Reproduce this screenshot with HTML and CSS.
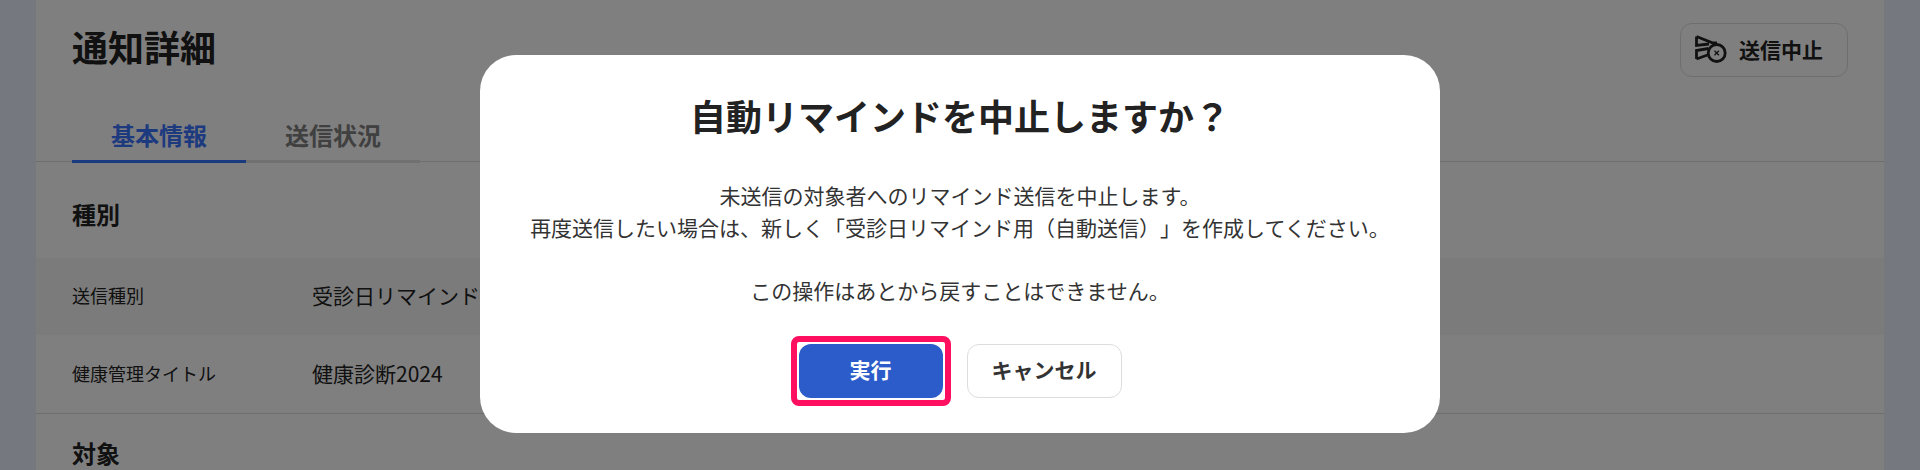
FILE: index.html
```html
<!DOCTYPE html>
<html lang="ja">
<head>
<meta charset="utf-8">
<title>通知詳細</title>
<link rel="stylesheet" href="styles.css">
</head>
<body>
<main class="card">
  <header class="head">
    <h1 class="page-title">通知詳細</h1>
    <button class="stop-btn" type="button">
      <svg class="stop-icon" viewBox="0 0 32 28" width="32" height="28" fill="none" stroke="currentColor" stroke-width="2.800">
        <path d="M1.500 1.500V10.500L14 9M1.500 1.500L18 8H22"/>
        <path d="M1.500 24V15.500L13.500 13.500M1.500 24L12.500 20"/>
        <circle cx="21.700" cy="18" r="8.500"/>
        <path d="M19.500 15.800l4.400 4.400m0-4.400l-4.400 4.400" stroke-width="1.300"/>
      </svg>
      <span>送信中止</span>
    </button>
  </header>
  <nav class="tabs">
    <a class="tab is-active">基本情報</a>
    <a class="tab">送信状況</a>
  </nav>
  <section class="section">
    <h2 class="section-title">種別</h2>
    <dl class="rows">
      <div class="row row-shaded">
        <dt>送信種別</dt>
        <dd>受診日リマインド用&#xFF08;自動送信&#xFF09;</dd>
      </div>
      <div class="row row-plain">
        <dt>健康管理タイトル</dt>
        <dd>健康診断2024</dd>
      </div>
    </dl>
  </section>
  <section class="section">
    <h2 class="section-title">対象</h2>
  </section>
</main>
<div class="overlay">
  <div class="modal" role="dialog">
    <h2 class="modal-title">自動リマインドを中止しますか&#xFF1F;</h2>
    <p class="modal-body">未送信の対象者へのリマインド送信を中止します。<br>再度送信したい場合は、新しく「受診日リマインド用&#xFF08;自動送信&#xFF09;」を作成してください。<br><br>この操作はあとから戻すことはできません。</p>
    <div class="modal-actions">
      <span class="focus-ring"><button class="btn btn-primary" type="button">実行</button></span>
      <button class="btn btn-ghost" type="button">キャンセル</button>
    </div>
  </div>
</div>
</body>
</html>
```
FILE: styles.css
```css
* { box-sizing: border-box; }
html, body { margin: 0; height: 470px; overflow: hidden; }
body {
  background: #eaf0ff;
  padding: 0 36px;
  font-family: "Noto Sans CJK JP", "Noto Sans", sans-serif;
  color: #222;
  text-spacing-trim: space-all;
}
button { font-family: inherit; }
.card { background: #fff; height: 470px; overflow: hidden; }
.head {
  display: flex;
  justify-content: space-between;
  align-items: flex-start;
  padding: 21px 36px 0;
  height: 110px;
}
.page-title { margin: 0; font-size: 36px; font-weight: 700; line-height: 50px; }
.stop-btn {
  display: flex;
  align-items: center;
  gap: 12px;
  width: 168px;
  height: 54px;
  margin-top: 2px;
  padding: 0 0 2px 14px;
  background: #fff;
  border: 1px solid #ddd;
  border-radius: 12px;
  color: #222;
  font-size: 21px;
  font-weight: 700;
}
.stop-icon { flex: none; }
.tabs {
  display: flex;
  padding: 0 36px;
  height: 52px;
  border-bottom: 1px solid #ddd;
}
.tab {
  width: 174px;
  height: 53px;
  text-align: center;
  font-size: 24px;
  font-weight: 700;
  line-height: 49px;
  color: #808080;
  border-bottom: 3px solid #e2e2e2;
}
.tab.is-active { color: #3c74ff; border-bottom-color: #3474ff; }
.section-title {
  margin: 0;
  padding: 35px 36px 27px;
  font-size: 24px;
  font-weight: 700;
  line-height: 34px;
}
.section + .section .section-title { padding-top: 24px; padding-bottom: 0; line-height: 30px; }
.rows { margin: 0; border-bottom: 1px solid #ddd; }
.row {
  display: flex;
  align-items: center;
  height: 77px;
  padding: 0 36px 3px;
}
.row-plain { height: 78px; padding-bottom: 2px; }
.row-shaded { background: #f6f6f6; }
.row dt { width: 240px; font-size: 18px; }
.row dd { margin: 0; font-size: 21px; }
.overlay {
  position: fixed;
  inset: 0;
  display: flex;
  justify-content: center;
  align-items: flex-start;
  padding-top: 55px;
  background: rgba(0, 0, 0, .5);
}
.modal {
  width: 960px;
  height: 378px;
  padding: 32px 36px 36px;
  background: #fff;
  border-radius: 36px;
  text-align: center;
}
.modal-title { margin: 0; font-size: 36px; font-weight: 700; line-height: 56px; }
.modal-body { margin: 37px 0 0; font-size: 21px; line-height: 31.500px; color: #333; }
.modal-actions { display: flex; justify-content: center; align-items: flex-start; gap: 24px; margin-top: 38px; }
.focus-ring {
  display: block;
  margin: -8px;
  padding: 2px;
  background: #fff;
  border: 6px solid #ff0f5f;
  border-radius: 8px;
}
.btn {
  display: block;
  height: 54px;
  padding: 0 0 4px;
  border-radius: 12px;
  font-size: 21px;
  font-weight: 700;
}
.btn-primary {
  width: 144px;
  border: 0;
  color: #fff;
  background: #2b5cc9;
}
.btn-ghost { width: 155px; color: #333; background: #fff; border: 1px solid #ddd; }
```
